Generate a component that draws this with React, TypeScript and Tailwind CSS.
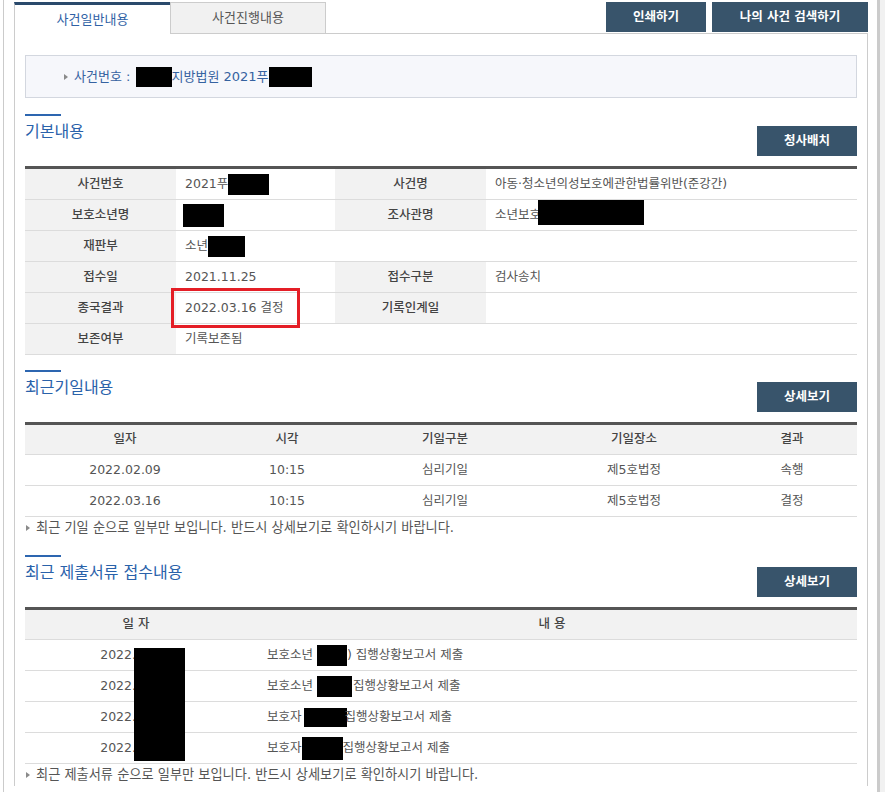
import React from 'react';

const Black = ({ className }: { className: string }) => (
  <span className={`inline-block bg-black align-middle ${className}`} />
);

const Bullet = () => (
  <svg width="4" height="6" viewBox="0 0 4 6" className="inline-block shrink-0">
    <path d="M0 0 L4 3 L0 6 Z" fill="#8a8a8a" />
  </svg>
);

const SectionHead = ({ title, button }: { title: string; button: string }) => (
  <div className="flex justify-between items-start">
    <div>
      <div className="w-[36px] h-[2px] bg-[#2d66b0]" />
      <h2 className="mt-[4px] text-[16px] leading-[24px] text-[#2a62aa]">{title}</h2>
    </div>
    <button className="mt-[12px] w-[100px] h-[30px] bg-[#38546b] text-white text-[12.5px] font-bold">
      {button}
    </button>
  </div>
);

const Note = ({ text }: { text: string }) => (
  <div className="h-[22px] flex items-center gap-[6px] pl-[1px] text-[13.2px] text-[#555]">
    <Bullet />
    <span>{text}</span>
  </div>
);

const App: React.FC = () => {
  const basic = [
    { l: '사건번호', v: <>2021푸<Black className="w-[41px] h-[21px]" /></>, l2: '사건명', v2: '아동·청소년의성보호에관한법률위반(준강간)' },
    { l: '보호소년명', v: <Black className="w-[41px] h-[23px] -ml-[2px]" />, l2: '조사관명', v2: <>소년보호<Black className="w-[106px] h-[25px] -ml-[3px] relative -top-[3px]" /></> },
    { l: '재판부', v: <>소년<Black className="w-[37px] h-[21px]" /></>, span: true },
    { l: '접수일', v: '2021.11.25', l2: '접수구분', v2: '검사송치' },
    { l: '종국결과', v: '2022.03.16 결정', l2: '기록인계일', v2: '', mark: true },
    { l: '보존여부', v: '기록보존됨', span: true },
  ];

  const hearings = [
    ['2022.02.09', '10:15', '심리기일', '제5호법정', '속행'],
    ['2022.03.16', '10:15', '심리기일', '제5호법정', '결정'],
  ];
  const hw = ['w-[200px]', 'w-[124px]', 'w-[192px]', 'w-[186px]', 'flex-1'];

  const docs = [
    { who: '보호소년', box: 'w-[30px] h-[21px] ml-[4px]', tail: ') 집행상황보고서 제출' },
    { who: '보호소년', box: 'w-[35px] h-[21px] ml-[4px] mr-[1px]', tail: '집행상황보고서 제출' },
    { who: '보호자', box: 'w-[43px] h-[19px] ml-[2px] -mr-[2px]', tail: '집행상황보고서 제출' },
    { who: '보호자', box: 'w-[41px] h-[23px] mr-[0px]', tail: '집행상황보고서 제출' },
  ];

  return (
    <div className="w-[885px] h-[792px] overflow-hidden bg-white flex font-['DejaVu_Sans','Noto_Sans_CJK_KR',sans-serif] text-[#555]">
      <div className="w-[3px]" />
      <div className="w-[11px] border-l border-[#cbcbcb]" />

      <main className="w-[854px]">
        {/* Tabs + top buttons */}
        <div className="flex h-[34px]">
          <div className="w-[156px] h-[32px] mt-[2px] border-l border-l-[#cccccc] border-t-[3px] border-t-[#2a4a6c] flex items-center justify-center text-[13px] text-[#2f61a5]">
            사건일반내용
          </div>
          <div className="w-[156px] h-[32px] mt-[2px] bg-[#f1f1f1] border border-[#cccccc] flex items-center justify-center text-[13px] text-[#555]">
            사건진행내용
          </div>
          <div className="flex-1 flex justify-end gap-[6px] pt-[2px] border-b border-[#cccccc]">
            <button className="w-[100px] h-[30px] bg-[#38546b] text-white text-[12.5px] font-bold">인쇄하기</button>
            <button className="w-[156px] h-[30px] bg-[#38546b] text-white text-[12.5px] font-bold">나의 사건 검색하기</button>
          </div>
        </div>

        <div className="border-l border-r border-[#cccccc] px-[10px] pt-[21px]">
          {/* Case number box */}
          <div className="h-[43px] bg-[#f6f7fb] border border-[#d3d7df] flex items-center pl-[38px] gap-[6px] text-[13px] text-[#3562a0]">
            <Bullet />
            <span className="flex items-center">
              사건번호 :&nbsp;<Black className="w-[36px] h-[20px] ml-[1px]" />지방법원 2021푸<Black className="w-[43px] h-[20px]" />
            </span>
          </div>

          {/* 기본내용 */}
          <div className="mt-[16px]">
            <SectionHead title="기본내용" button="청사배치" />
            <div className="mt-[10px] border-t-[3px] border-[#555] text-[12.5px]">
              {basic.map((r, i) => (
                <div key={i} className="flex h-[31px] border-b border-[#dcdcdc]">
                  <div className="w-[151px] bg-[#f2f2f2] flex items-center justify-center font-medium text-[#444]">{r.l}</div>
                  <div className={`${r.span ? 'flex-1' : 'w-[159px]'} relative flex items-center pl-[9px]`}>
                    {r.v}
                    {r.mark && (
                      <div className="absolute -left-[5px] -top-[5px] w-[129px] h-[40px] border-[3px] border-[#e41e26]" />
                    )}
                  </div>
                  {!r.span && (
                    <>
                      <div className="w-[151px] bg-[#f2f2f2] flex items-center justify-center font-medium text-[#444]">{r.l2}</div>
                      <div className="flex-1 flex items-center pl-[9px]">{r.v2}</div>
                    </>
                  )}
                </div>
              ))}
            </div>
          </div>

          {/* 최근기일내용 */}
          <div className="mt-[15px]">
            <SectionHead title="최근기일내용" button="상세보기" />
            <div className="mt-[10px] border-t-[3px] border-[#555] text-[12.5px]">
              <div className="flex h-[30px] bg-[#f2f2f2] border-b border-[#dcdcdc] font-medium text-[#444]">
                {['일자', '시각', '기일구분', '기일장소', '결과'].map((h, i) => (
                  <div key={h} className={`${hw[i]} flex items-center justify-center`}>{h}</div>
                ))}
              </div>
              {hearings.map((row, r) => (
                <div key={r} className="flex h-[31px] border-b border-[#dcdcdc]">
                  {row.map((c, i) => (
                    <div key={i} className={`${hw[i]} flex items-center justify-center`}>{c}</div>
                  ))}
                </div>
              ))}
            </div>
            <Note text="최근 기일 순으로 일부만 보입니다. 반드시 상세보기로 확인하시기 바랍니다." />
          </div>

          {/* 최근 제출서류 접수내용 */}
          <div className="mt-[16px]">
            <SectionHead title="최근 제출서류 접수내용" button="상세보기" />
            <div className="mt-[10px] border-t-[3px] border-[#555] text-[12.5px]">
              <div className="flex h-[30px] bg-[#f2f2f2] border-b border-[#dcdcdc] font-medium text-[#444]">
                <div className="w-[222px] flex items-center justify-center">일 자</div>
                <div className="flex-1 flex items-center justify-center">내 용</div>
              </div>
              <div className="relative">
                {docs.map((d, i) => (
                  <div key={i} className="flex h-[31px] border-b border-[#dcdcdc]">
                    <div className="w-[222px] flex items-center justify-center">2022.01.01</div>
                    <div className="flex-1 flex items-center pl-[20px]">
                      {d.who}
                      <Black className={d.box} />
                      {d.tail}
                    </div>
                  </div>
                ))}
                <div className="absolute left-[109px] top-[8px] w-[51px] h-[113px] bg-black" />
              </div>
            </div>
            <Note text="최근 제출서류 순으로 일부만 보입니다. 반드시 상세보기로 확인하시기 바랍니다." />
          </div>
        </div>
      </main>

      <div className="w-[9px]" />
      <div className="w-[3px] bg-[#cbcbcb]" />
      <div className="flex-1 bg-[#f1f1f1]" />
    </div>
  );
};

export default App;
